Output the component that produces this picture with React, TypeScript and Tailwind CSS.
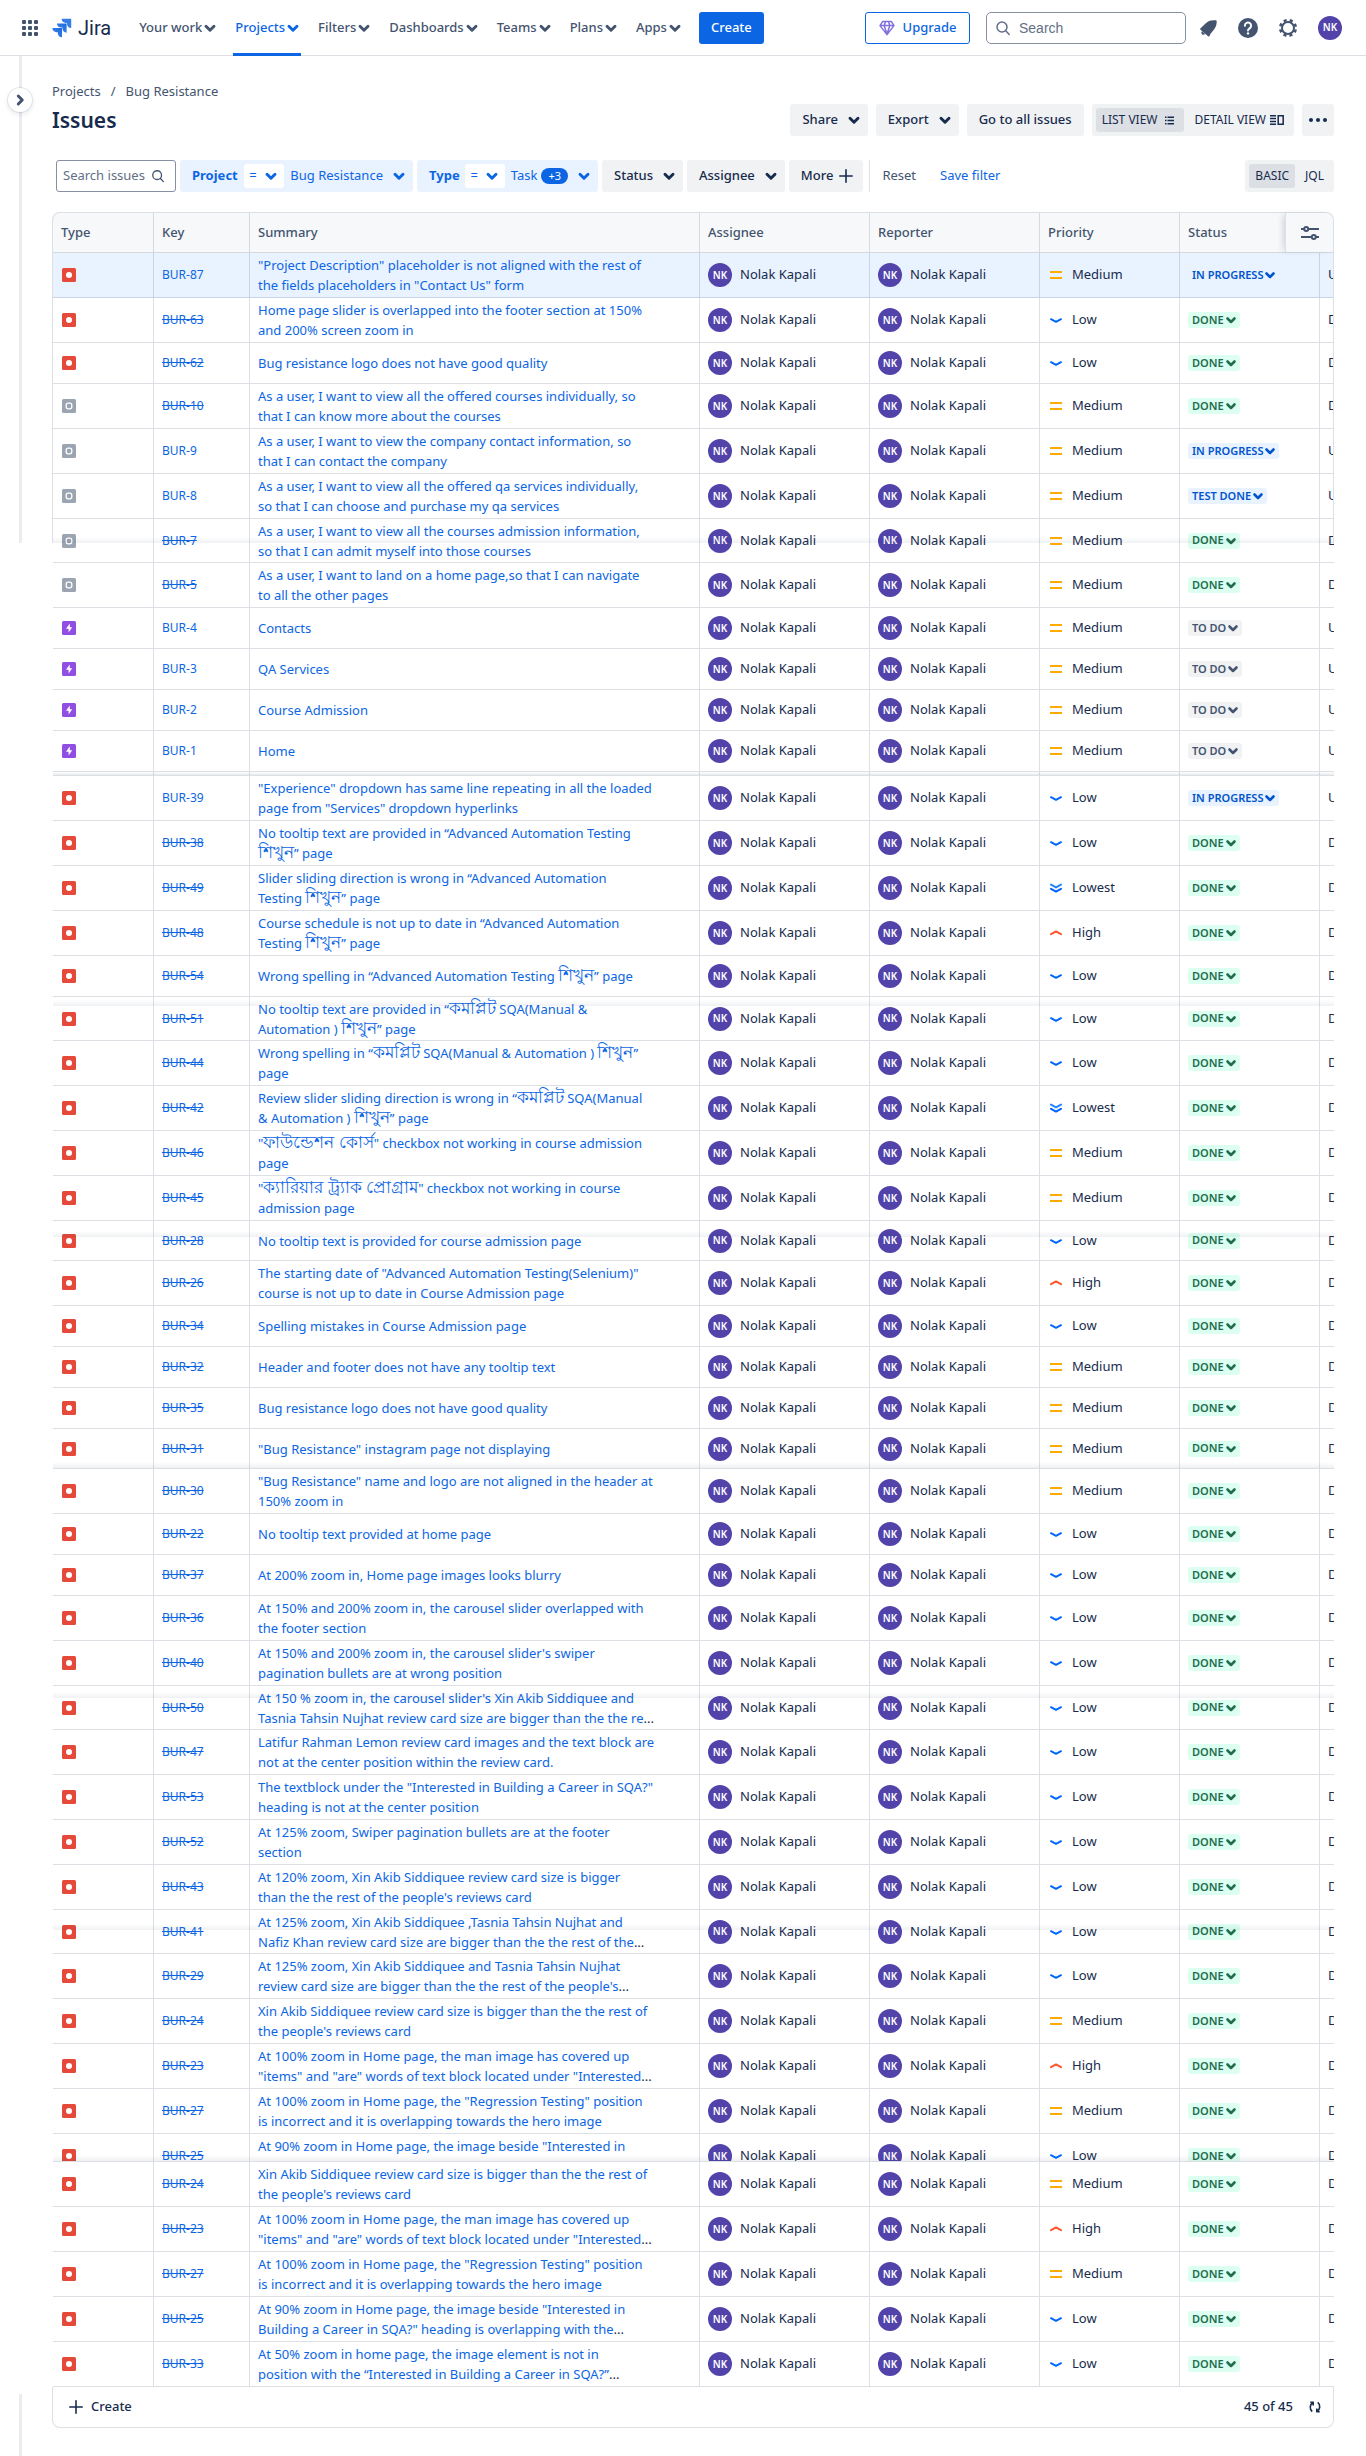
import type { ReactNode } from "react";

type IssueType = "bug" | "task" | "epic";
type Priority = "High" | "Medium" | "Low" | "Lowest";
type Status = "DONE" | "IN PROGRESS" | "TEST DONE" | "TO DO";

interface Issue {
  type?: IssueType;
  num: number;
  lines: string[];
  priority: Priority;
  status?: Status;
  height?: string;
  clip?: boolean;
  seam?: string;
}

const H45 = "h-11";
const H44 = "h-[43px]";
const H41 = "h-10";
const H40 = "h-[39px]";

const issues: Issue[] = [
  { num: 87, lines: ['"Project Description" placeholder is not aligned with the rest of', 'the fields placeholders in "Contact Us" form'], priority: "Medium", status: "IN PROGRESS" },
  { num: 63, lines: ["Home page slider is overlapped into the footer section at 150%", "and 200% screen zoom in"], priority: "Low" },
  { num: 62, lines: ["Bug resistance logo does not have good quality"], priority: "Low" },
  { type: "task", num: 10, lines: ["As a user, I want to view all the offered courses individually, so", "that I can know more about the courses"], priority: "Medium" },
  { type: "task", num: 9, lines: ["As a user, I want to view the company contact information, so", "that I can contact the company"], priority: "Medium", status: "IN PROGRESS" },
  { type: "task", num: 8, lines: ["As a user, I want to view all the offered qa services individually,", "so that I can choose and purchase my qa services"], priority: "Medium", status: "TEST DONE" },
  { type: "task", num: 7, lines: ["As a user, I want to view all the courses admission information,", "so that I can admit myself into those courses"], priority: "Medium", height: H44, seam: "h-6" },
  { type: "task", num: 5, lines: ["As a user, I want to land on a home page,so that I can navigate", "to all the other pages"], priority: "Medium" },
  { type: "epic", num: 4, lines: ["Contacts"], priority: "Medium", status: "TO DO" },
  { type: "epic", num: 3, lines: ["QA Services"], priority: "Medium", status: "TO DO" },
  { type: "epic", num: 2, lines: ["Course Admission"], priority: "Medium", status: "TO DO" },
  { type: "epic", num: 1, lines: ["Home"], priority: "Medium", status: "TO DO" },
  { num: 39, lines: ['"Experience" dropdown has same line repeating in all the loaded', 'page from "Services" dropdown hyperlinks'], priority: "Low", status: "IN PROGRESS" },
  { num: 38, lines: ["No tooltip text are provided in “Advanced Automation Testing", "শিখুন” page"], priority: "Low" },
  { num: 49, lines: ["Slider sliding direction is wrong in “Advanced Automation", "Testing শিখুন” page"], priority: "Lowest" },
  { num: 48, lines: ["Course schedule is not up to date in “Advanced Automation", "Testing শিখুন” page"], priority: "High" },
  { num: 54, lines: ["Wrong spelling in “Advanced Automation Testing শিখুন” page"], priority: "Low" },
  { num: 51, lines: ["No tooltip text are provided in “কমপ্লিট SQA(Manual &", "Automation ) শিখুন” page"], priority: "Low", height: H44, seam: "h-[9px]" },
  { num: 44, lines: ["Wrong spelling in “কমপ্লিট SQA(Manual & Automation ) শিখুন”", "page"], priority: "Low" },
  { num: 42, lines: ["Review slider sliding direction is wrong in “কমপ্লিট SQA(Manual", "& Automation ) শিখুন” page"], priority: "Lowest" },
  { num: 46, lines: ['"ফাউন্ডেশন কোর্স" checkbox not working in course admission', "page"], priority: "Medium" },
  { num: 45, lines: ['"ক্যারিয়ার ট্র্যাক প্রোগ্রাম" checkbox not working in course', "admission page"], priority: "Medium" },
  { num: 28, lines: ["No tooltip text is provided for course admission page"], priority: "Low", height: H40, seam: "h-4" },
  { num: 26, lines: ['The starting date of "Advanced Automation Testing(Selenium)"', "course is not up to date in Course Admission page"], priority: "High" },
  { num: 34, lines: ["Spelling mistakes in Course Admission page"], priority: "Low" },
  { num: 32, lines: ["Header and footer does not have any tooltip text"], priority: "Medium" },
  { num: 35, lines: ["Bug resistance logo does not have good quality"], priority: "Medium" },
  { num: 31, lines: ['"Bug Resistance" instagram page not displaying'], priority: "Medium", height: H40, seam: "h-[39px]" },
  { num: 30, lines: ['"Bug Resistance" name and logo are not aligned in the header at', "150% zoom in"], priority: "Medium" },
  { num: 22, lines: ["No tooltip text provided at home page"], priority: "Low" },
  { num: 37, lines: ["At 200% zoom in, Home page images looks blurry"], priority: "Low" },
  { num: 36, lines: ["At 150% and 200% zoom in, the carousel slider overlapped with", "the footer section"], priority: "Low" },
  { num: 40, lines: ["At 150% and 200% zoom in, the carousel slider's swiper", "pagination bullets are at wrong position"], priority: "Low" },
  { num: 50, lines: ["At 150 % zoom in, the carousel slider's Xin Akib Siddiquee and", "Tasnia Tahsin Nujhat review card size are bigger than the the re..."], priority: "Low", height: H44, seam: "h-3" },
  { num: 47, lines: ["Latifur Rahman Lemon review card images and the text block are", "not at the center position within the review card."], priority: "Low" },
  { num: 53, lines: ['The textblock under the "Interested in Building a Career in SQA?"', "heading is not at the center position"], priority: "Low" },
  { num: 52, lines: ["At 125% zoom, Swiper pagination bullets are at the footer", "section"], priority: "Low" },
  { num: 43, lines: ["At 120% zoom, Xin Akib Siddiquee review card size is bigger", "than the the rest of the people's reviews card"], priority: "Low" },
  { num: 41, lines: ["At 125% zoom, Xin Akib Siddiquee ,Tasnia Tahsin Nujhat and", "Nafiz Khan review card size are bigger than the the rest of the..."], priority: "Low", height: H44, seam: "h-5" },
  { num: 29, lines: ["At 125% zoom, Xin Akib Siddiquee and Tasnia Tahsin Nujhat", "review card size are bigger than the the rest of the people's..."], priority: "Low" },
  { num: 24, lines: ["Xin Akib Siddiquee review card size is bigger than the the rest of", "the people's reviews card"], priority: "Medium" },
  { num: 23, lines: ["At 100% zoom in Home page, the man image has covered up", '"items" and "are" words of text block located under "Interested...'], priority: "High" },
  { num: 27, lines: ['At 100% zoom in Home page, the "Regression Testing" position', "is incorrect and it is overlapping towards the hero image"], priority: "Medium" },
  { num: 25, lines: ['At 90% zoom in Home page, the image beside "Interested in', ""], priority: "Low", clip: true, seam: "h-[27px]" },
  { num: 24, lines: ["Xin Akib Siddiquee review card size is bigger than the the rest of", "the people's reviews card"], priority: "Medium" },
  { num: 23, lines: ["At 100% zoom in Home page, the man image has covered up", '"items" and "are" words of text block located under "Interested...'], priority: "High" },
  { num: 27, lines: ['At 100% zoom in Home page, the "Regression Testing" position', "is incorrect and it is overlapping towards the hero image"], priority: "Medium" },
  { num: 25, lines: ['At 90% zoom in Home page, the image beside "Interested in', 'Building a Career in SQA?" heading is overlapping with the...'], priority: "Low" },
  { num: 33, lines: ["At 50% zoom in home page, the image element is not in", "position with the “Interested in Building a Career in SQA?”..."], priority: "Low" },
];

function Chevron({ className = "size-2" }: { className?: string }) {
  return (
    <svg viewBox="0 0 12 12" className={className} fill="none" stroke="currentColor" strokeWidth="2.200" strokeLinecap="round" strokeLinejoin="round" aria-hidden="true">
      <path d="M3 4.700l3 3 3-3" />
    </svg>
  );
}

function SearchIcon({ className }: { className: string }) {
  return (
    <svg viewBox="0 0 16 16" className={className} fill="none" stroke="currentColor" strokeWidth="1.5" strokeLinecap="round" aria-hidden="true">
      <circle cx="7" cy="7" r="5" />
      <path d="m10.8 10.8 3.4 3.6" />
    </svg>
  );
}

function Plus() {
  return (
    <svg viewBox="0 0 14 14" className="size-3.5" stroke="currentColor" strokeWidth="1.6" strokeLinecap="round" aria-hidden="true">
      <path d="M7 .8v12.4M.8 7h12.4" />
    </svg>
  );
}

function Avatar() {
  return (
    <span className="flex size-6 shrink-0 items-center justify-center rounded-full bg-[#5243aa] text-[10px] font-semibold text-white">
      NK
    </span>
  );
}

function TypeIcon({ type }: { type: IssueType }) {
  return (
    <svg viewBox="-1 -1 16 16" className="size-4" role="img" aria-label={type}>
      {type === "bug" && (
        <>
          <rect width="14" height="14" rx="1.5" fill="#e5493a" />
          <circle cx="7" cy="7" r="3" fill="#fff" />
        </>
      )}
      {type === "task" && (
        <>
          <rect width="14" height="14" rx="1.5" fill="#9aa5b1" />
          <rect x="4.200" y="4.200" width="5.600" height="5.600" rx="2" fill="none" stroke="#fff" strokeWidth="1.3" />
        </>
      )}
      {type === "epic" && (
        <>
          <rect width="14" height="14" rx="1.5" fill="#904ee2" />
          <path d="M7.8 2.6 4 7.8h2.6v3.6L10.2 6.2H7.8z" fill="#fff" />
        </>
      )}
    </svg>
  );
}

function PriorityIcon({ priority }: { priority: Priority }) {
  const common = { fill: "none", strokeWidth: 2, strokeLinecap: "round" as const, strokeLinejoin: "round" as const };
  return (
    <svg viewBox="0 0 16 16" className="size-4" aria-hidden="true">
      {priority === "Medium" && <path d="M2 4h12v2H2zM2 10h12v2H2z" fill="#ffab00" />}
      {priority === "Low" && <path d="M3 7.2l5 2.6 5-2.6" stroke="#0065ff" {...common} />}
      {priority === "High" && <path d="M3 9.2l5-2.8 5 2.8" stroke="#ff5630" {...common} />}
      {priority === "Lowest" && (
        <>
          <path d="M3 4.6l5 2.8 5-2.8" stroke="#2684ff" {...common} />
          <path d="M3 8.8l5 2.8 5-2.8" stroke="#0065ff" {...common} />
        </>
      )}
    </svg>
  );
}

const statusStyles: Record<Status, string> = {
  DONE: "bg-[#dcfff1] text-[#216e4e]",
  "IN PROGRESS": "bg-[#e9f2ff] text-[#0055cc]",
  "TEST DONE": "bg-[#e9f2ff] text-[#0055cc]",
  "TO DO": "bg-[#f1f2f4] text-[#44546f]",
};

function Person() {
  return (
    <div className="flex items-center gap-2">
      <Avatar />
      <span>Nolak Kapali</span>
    </div>
  );
}

function Seam({ height }: { height: string }) {
  return (
    <div className={`pointer-events-none absolute inset-x-0 top-0 flex items-end ${height}`}>
      <div className="h-1.5 w-full bg-linear-to-t from-[#091e4210] to-transparent" />
    </div>
  );
}

/* Bengali runs are set larger than the Latin text around them. */
function SummaryLine({ text }: { text: string }) {
  const cut = text.endsWith("...");
  const body = cut ? text.slice(0, -3) : text;
  const parts = body.split(/([\u0980-\u09ff]+(?: [\u0980-\u09ff]+)*)/);
  return (
    <span className="block h-5 leading-5">
      {parts.map((part, i) =>
        i % 2 === 1 ? (
          <span key={i} className="text-[17px] leading-none">
            {part}
          </span>
        ) : (
          part
        ),
      )}
      {cut && <span className="text-[#172b4d]">...</span>}
    </span>
  );
}

function Row({ issue, selected }: { issue: Issue; selected: boolean }) {
  const type = issue.type ?? "bug";
  const status = issue.status ?? "DONE";
  const height = issue.height ?? (issue.lines.length > 1 ? H45 : H41);
  const border = "border-b border-[#091e4224] p-0";
  const box = (node: ReactNode) => (
    <div className={issue.clip ? "h-[27px] overflow-hidden px-2" : "px-2"}>
      <div className={`flex items-center ${height}`}>{node}</div>
    </div>
  );
  return (
    <tr className={selected ? "relative bg-[#e9f2ff]" : "relative"}>
      <td className={`${border} border-r`}>
        {box(<TypeIcon type={type} />)}
        {issue.seam && <Seam height={issue.seam} />}
      </td>
      <td className={`${border} border-r`}>
        {box(
          <a href="#" className={status === "DONE" ? "text-xs text-[#0c66e4] line-through" : "text-xs text-[#0c66e4]"}>
            BUR-{issue.num}
          </a>,
        )}
      </td>
      <td className={`${border} border-r`}>
        {box(
          <a href="#" className="block text-[#0c66e4]">
            {issue.lines.map((line) => (
              <SummaryLine key={line} text={line} />
            ))}
          </a>,
        )}
      </td>
      <td className={`${border} border-r`}>{box(<Person />)}</td>
      <td className={`${border} border-r`}>{box(<Person />)}</td>
      <td className={`${border} border-r`}>
        {box(
          <div className="flex items-center gap-2">
            <PriorityIcon priority={issue.priority} />
            <span>{issue.priority}</span>
          </div>,
        )}
      </td>
      <td className={`${border} border-r`}>
        {box(
          <button className={`flex h-4 items-center rounded-[3px] pr-0.5 pl-1 text-[11px] font-semibold ${statusStyles[status]}`}>
            {status}
            <Chevron className="size-3.5" />
          </button>,
        )}
      </td>
      <td className={border}>{box(<span>{status === "DONE" ? "Done" : "Unresolved"}</span>)}</td>
    </tr>
  );
}

function GapRow() {
  return (
    <tr className="relative">
      {[0, 1, 2, 3, 4, 5, 6, 7].map((i) => (
        <td key={i} className={i < 7 ? "h-1 border-r border-b border-[#091e4224] p-0" : "h-1 border-b border-[#091e4224] p-0"}>
          {i === 0 && (
            <div className="pointer-events-none absolute inset-x-0 top-0 h-[3px] bg-linear-to-t from-[#091e4218] to-transparent" />
          )}
        </td>
      ))}
    </tr>
  );
}

function NavItem({ label, active }: { label: string; active?: boolean }) {
  return (
    <div className="relative flex h-full items-center">
      <button className={active ? "flex items-center pl-0.5 text-[13px] font-medium text-[#0c66e4]" : "flex items-center pl-0.5 text-[13px] font-medium text-[#44546f]"}>
        {label}
        <Chevron className="size-4" />
      </button>
      {active && <span className="absolute inset-x-0 -bottom-px h-[3px] bg-[#0c66e4]" />}
    </div>
  );
}

function GrayButton({ children, chevron }: { children: ReactNode; chevron?: boolean }) {
  return (
    <button className={chevron ? "flex h-8 items-center gap-2 rounded-[3px] bg-[#f1f2f4] pr-1.5 pl-3 text-[13px] font-medium" : "h-8 rounded-[3px] bg-[#f1f2f4] px-3 text-[13px] font-medium"}>
      {children}
      {chevron && <Chevron className="size-4" />}
    </button>
  );
}

function FilterChip({ name, value, count, className }: { name: string; value: string; count?: string; className: string }) {
  return (
    <div className={`flex h-8 items-center justify-between rounded-[3px] bg-[#e9f2ff] pr-1.5 pl-3 text-[13px] text-[#0c66e4] ${className}`}>
      <span className="font-bold">{name}</span>
      <button className="flex h-6 w-10 items-center justify-center gap-1.5 rounded-[3px] bg-white">
        = <Chevron className="size-4" />
      </button>
      <button className="flex items-center gap-1">
        {value}
        {count && <span className="rounded-full bg-[#0c66e4] px-[7px] text-[11px] leading-4 text-white">{count}</span>}
        <Chevron className="ml-1 size-4" />
      </button>
    </div>
  );
}

function TopNav() {
  return (
    <header className="flex h-14 items-center border-b border-[#dcdfe4] pr-6 pl-[22px]">
      <button aria-label="Switch to" className="grid grid-cols-3 gap-0.5">
        {[0, 1, 2, 3, 4, 5, 6, 7, 8].map((i) => (
          <span key={i} className="size-1 rounded-[1px] bg-[#44546f]" />
        ))}
      </button>
      <a href="#" className="ml-3.5 flex items-center gap-1.5 text-[#172b4d]">
        <svg viewBox="0 0 20 20" className="size-5" aria-hidden="true">
          <defs>
            <linearGradient id="jira-fold" x1="1" y1="0" x2="0" y2="1">
              <stop offset="0" stopColor="#1868db" />
              <stop offset=".6" stopColor="#357de8" />
            </linearGradient>
          </defs>
          <path d="M9.6.8h9.6v9.3c-2.300 0-4.200-1.800-4.200-4.100V5h-1.200C11.500 5 9.600 3.100 9.600.8Z" fill="#357de8" />
          <path d="M5 5.400h9.600v9.300c-2.300 0-4.200-1.800-4.200-4.100V9.600H9.200C6.900 9.600 5 7.700 5 5.400Z" fill="url(#jira-fold)" />
          <path d="M.4 10H10v9.300c-2.300 0-4.200-1.800-4.200-4.100v-1H4.600C2.300 14.200.4 12.300.4 10Z" fill="url(#jira-fold)" />
        </svg>
        <span className="font-[Roboto] text-xl leading-6">Jira</span>
      </a>
      <nav className="ml-[26px] flex h-full items-stretch gap-[15px]">
        <NavItem label="Your work" />
        <NavItem label="Projects" active />
        <NavItem label="Filters" />
        <NavItem label="Dashboards" />
        <NavItem label="Teams" />
        <NavItem label="Plans" />
        <NavItem label="Apps" />
      </nav>
      <button className="ml-4 h-8 rounded-[3px] bg-[#0c66e4] px-3 text-[13px] font-medium text-white">Create</button>
      <div className="ml-auto flex items-center">
        <button className="flex h-8 w-[105px] items-center justify-center gap-2 rounded-[3px] border border-[#0c66e4] text-[13px] font-medium text-[#0c66e4]">
          <svg viewBox="0 0 16 16" className="size-4" fill="none" stroke="#8270db" strokeWidth="1.5" strokeLinejoin="round" aria-hidden="true">
            <path d="M3.600 1.600h8.800L15 5.600 8 14.600 1 5.600zM1 5.600h14M5.200 5.600 8 14.200l2.800-8.600M5.200 5.600 6.400 1.800M10.800 5.600 9.600 1.800" />
          </svg>
          Upgrade
        </button>
        <label className="ml-4 flex h-8 w-[200px] items-center gap-2 rounded-[5px] border border-[#8590a2] px-2 text-[#626f86]">
          <SearchIcon className="size-4 shrink-0" />
          <input aria-label="Search" placeholder="Search" className="w-full min-w-0 bg-transparent font-['Liberation_Sans'] text-sm outline-none placeholder:text-[#626f86]" />
        </label>
        <div className="ml-2.5 flex items-center gap-4 text-[#44546f]">
          <button aria-label="Notifications">
            <svg viewBox="0 0 24 24" className="size-6" fill="currentColor" aria-hidden="true">
              <path d="M19.600 4.300c-4-.3-6.800.2-9.500 2.600L4.800 12c-.8.8-.8 1.500 0 2.100l7.300 6.100c.6.400 1.200.2 1.500-.3.300-.7.300-1.300 1-2.200l3.600-4.500c1.900-2.600 2.500-4.800 2.500-7.900 0-.3-.3-1-1.100-1Z" />
              <path d="M6 15.200c-.9 1-.8 2.300.1 3 .9.800 2.300.7 3-.2z" />
            </svg>
          </button>
          <button aria-label="Help">
            <svg viewBox="0 0 24 24" className="size-6" aria-hidden="true">
              <circle cx="12" cy="12" r="10" fill="currentColor" />
              <path d="M8.900 9.700a3.100 3.100 0 1 1 4.700 2.600c-1 .6-1.600 1.100-1.600 2.200" fill="none" stroke="#fff" strokeWidth="2" strokeLinecap="round" />
              <circle cx="12" cy="17.400" r="1.200" fill="#fff" />
            </svg>
          </button>
          <button aria-label="Settings">
            <svg viewBox="0 0 24 24" className="size-6" fill="none" stroke="currentColor" aria-hidden="true">
              <circle cx="12" cy="12" r="6" strokeWidth="2" />
              <circle cx="12" cy="12" r="7.800" strokeWidth="2.600" strokeDasharray="3.060 3.060" strokeDashoffset="-1.530" />
            </svg>
          </button>
          <button aria-label="Your profile" className="ml-0.5">
            <Avatar />
          </button>
        </div>
      </div>
    </header>
  );
}

const columns = ["Type", "Key", "Summary", "Assignee", "Reporter", "Priority", "Status", ""];

export default function App() {
  return (
    <div className="bg-white font-['Noto_Sans',sans-serif] text-[13px] text-[#172b4d]">
      <TopNav />
      <div className="flex">
        <aside className="relative flex w-[52px] shrink-0 flex-col justify-between pl-[19px]">
          <div className="h-[487px] w-[3px] bg-[#ebecf0]" />
          <div className="h-[62px] w-[3px] bg-[#ebecf0]" />
          <button aria-label="Expand sidebar" className="absolute top-8 left-2 flex size-6 items-center justify-center rounded-full bg-white text-[#44546f] shadow-[0_0_0_1px_#091e4214,0_2px_4px_1px_#091e4214]">
            <Chevron className="size-4 -rotate-90" />
          </button>
        </aside>
        <main className="mr-8 mb-2 min-w-0 flex-1 pb-5">
          <nav aria-label="Breadcrumb" className="mt-[26px] flex h-5 items-center gap-2.5 text-[#44546f]">
            <a href="#">Projects</a>
            <span>/</span>
            <a href="#">Bug Resistance</a>
          </nav>
          <div className="mt-0.5 flex h-8 items-center gap-2">
            <h1 className="mr-auto text-[21px] leading-8 font-semibold">Issues</h1>
            <GrayButton chevron>Share</GrayButton>
            <GrayButton chevron>Export</GrayButton>
            <GrayButton>Go to all issues</GrayButton>
            <div className="flex h-8 items-center gap-1 rounded-[3px] bg-[#f1f2f4] p-1 text-xs font-medium">
              <button className="flex h-6 items-center gap-2 rounded-[3px] bg-[#dcdfe4] pr-2.5 pl-1.5 font-normal">
                LIST VIEW
                <svg viewBox="0 0 9 9" className="size-[9px]" fill="currentColor" aria-hidden="true">
                  <path d="M0 .5h1.500V2H0zM2.500.5H9V2H2.500zM0 3.700h1.500v1.500H0zM2.500 3.700H9v1.500H2.500zM0 7h1.500v1.500H0zM2.500 7H9v1.500H2.500z" />
                </svg>
              </button>
              <button className="flex h-6 items-center gap-1 px-1.5 font-normal">
                DETAIL VIEW
                <svg viewBox="0 0 14 10" className="h-2.5 w-3.5" fill="none" stroke="currentColor" strokeWidth="1.500" aria-hidden="true">
                  <path d="M0 .8h6M0 3.600h6M0 6.400h6M0 9.200h6M8.200.8h5v8.400h-5z" />
                </svg>
              </button>
            </div>
            <button aria-label="More actions" className="flex h-8 w-8 items-center justify-center gap-[3px] rounded-[3px] bg-[#f1f2f4]">
              <span className="size-1 rounded-full bg-[#172b4d]" />
              <span className="size-1 rounded-full bg-[#172b4d]" />
              <span className="size-1 rounded-full bg-[#172b4d]" />
            </button>
          </div>
          <div className="mt-6 flex h-8 items-center gap-1 pl-1">
            <label className="flex h-8 w-[120px] items-center rounded-[3px] border border-[#8590a2] px-1.5 text-[#44546f]">
              <input aria-label="Search issues" placeholder="Search issues" className="w-full min-w-0 bg-transparent outline-none placeholder:text-[#626f86]" />
              <SearchIcon className="mr-1 size-3.5 shrink-0" />
            </label>
            <FilterChip name="Project" value="Bug Resistance" className="w-[233px]" />
            <FilterChip name="Type" value="Task" count="+3" className="w-[181px]" />
            <GrayButton chevron>Status</GrayButton>
            <GrayButton chevron>Assignee</GrayButton>
            <button className="flex h-8 items-center gap-1.5 rounded-[3px] bg-[#f1f2f4] px-3 pr-2.5 font-medium">
              More
              <Plus />
            </button>
            <span className="ml-0.5 h-8 w-px bg-[#dcdfe4]" />
            <button className="px-2 text-[#44546f]">Reset</button>
            <button className="px-3 text-[#0c66e4]">Save filter</button>
            <div className="ml-auto flex h-8 items-center gap-1 rounded-[3px] bg-[#f1f2f4] p-1 text-xs">
              <button className="h-6 rounded-[3px] bg-[#dcdfe4] px-1.5">BASIC</button>
              <button className="h-6 px-1.5">JQL</button>
            </div>
          </div>
          <div className="relative mt-5">
            <div className="overflow-hidden rounded-t-lg px-px pt-px">
              <table className="w-[1406px] table-fixed border-separate border-spacing-0 text-left whitespace-nowrap">
                <colgroup>
                  <col className="w-[101px]" />
                  <col className="w-24" />
                  <col className="w-[450px]" />
                  <col className="w-[170px]" />
                  <col className="w-[170px]" />
                  <col className="w-[140px]" />
                  <col className="w-[140px]" />
                  <col className="w-[140px]" />
                </colgroup>
                <thead>
                  <tr className="bg-[#f7f8f9] text-[#44546f]">
                    {columns.map((c, i) => (
                      <th key={c} className={i < 6 ? "h-10 border-r border-b border-[#091e4224] px-2 py-0 font-medium" : "h-10 border-b border-[#091e4224] px-2 py-0 font-medium"}>
                        {c}
                      </th>
                    ))}
                  </tr>
                </thead>
                <tbody>
                  {issues.slice(0, 12).map((issue, i) => (
                    <Row key={issue.num} issue={issue} selected={i === 0} />
                  ))}
                  <GapRow />
                  {issues.slice(12).map((issue, i) => (
                    <Row key={i} issue={issue} selected={false} />
                  ))}
                </tbody>
              </table>
            </div>
            <div className="pointer-events-none absolute inset-x-0 top-0 h-[331px] rounded-t-lg border border-b-0 border-[#dcdfe4]" />
            <button aria-label="Configure columns" className="absolute top-px right-px flex h-[39px] w-12 items-center justify-center rounded-tr-lg border-l border-[#dcdfe4] bg-[#f7f8f9] text-[#44546f] shadow-[-4px_0_6px_-2px_#091e4229]">
              <svg viewBox="0 0 18 14" className="h-3.5 w-[18px]" fill="none" stroke="currentColor" strokeWidth="2" aria-hidden="true">
                <path d="M0 3h3M7.500 3H18M0 11h10.500M15 11h3" />
                <circle cx="5.200" cy="3" r="2" />
                <circle cx="12.800" cy="11" r="2" />
              </svg>
            </button>
            <footer className="flex h-[41px] items-center justify-between rounded-b-lg border border-t-0 border-[#dcdfe4] px-4 font-medium">
              <button className="flex items-center gap-2">
                <Plus />
                Create
              </button>
              <div className="flex items-center gap-4">
                <span>45 of 45</span>
                <button aria-label="Refresh" className="-mr-1">
                  <svg viewBox="0 0 12 12" className="size-3" fill="none" stroke="currentColor" strokeWidth="1.600" aria-hidden="true">
                    <path d="M4.800 1.200H1.300M4.200 1.200v3.300M4 1.500C.6 3.500.4 8.200 3.200 10.600M7.200 10.800h3.500M7.800 10.800V7.500M8 10.500c3.400-2 3.600-6.700.8-9.100" />
                  </svg>
                </button>
              </div>
            </footer>
          </div>
        </main>
      </div>
    </div>
  );
}
